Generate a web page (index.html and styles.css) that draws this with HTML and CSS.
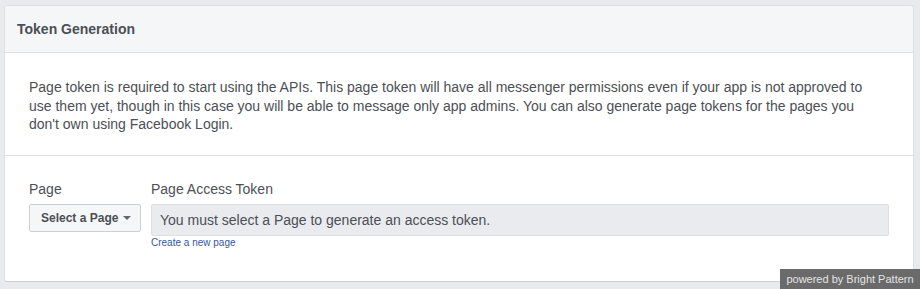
FILE: index.html
```html
<!DOCTYPE html>
<html lang="en">
<head>
    <meta charset="UTF-8">
    <title>Token Generation</title>
    <link rel="stylesheet" href="styles.css">
</head>
<body>
    <div class="card">
        <div class="card-header">Token Generation</div>
        <div class="card-intro">
            <p>Page token is required to start using the APIs. This page token will have all messenger permissions even if your app is not approved to use them yet, though in this case you will be able to message only app admins. You can also generate page tokens for the pages you don't own using Facebook Login.</p>
        </div>
        <div class="token-row">
            <div class="field">
                <label class="field-label">Page</label>
                <button class="page-select">Select a Page <span class="caret"></span></button>
            </div>
            <div class="field field-grow">
                <label class="field-label">Page Access Token</label>
                <div class="token-box">You must select a Page to generate an access token.</div>
                <a class="small-link" href="#">Create a new page</a>
            </div>
        </div>
    </div>
    <div class="powered">powered by Bright Pattern</div>
</body>
</html>
```

FILE: styles.css
```css
body {
    margin: 0;
    padding: 5px 6px 0 4px;
    background-color: #e9eaed;
    font-family: "Liberation Sans", Arial, sans-serif;
    color: #4b4f56;
    height: 289px;
    box-sizing: border-box;
}
.card {
    background-color: #fff;
    border: 1px solid #dddfe2;
    border-bottom-color: #ccd0d5;
    border-radius: 3px;
    height: 277px;
    box-sizing: border-box;
}
.card-header {
    background-color: #f5f6f7;
    border-bottom: 1px solid #dddfe2;
    border-radius: 3px 3px 0 0;
    height: 47px;
    box-sizing: border-box;
    padding: 15px 12px 0;
    font-size: 14px;
    font-weight: bold;
    line-height: 16px;
}
.card-intro {
    border-bottom: 1px solid #dddfe2;
    padding: 0 40px 0 24px;
    height: 103px;
    box-sizing: border-box;
}
.card-intro p {
    margin: 0;
    padding-top: 25px;
    font-size: 14px;
    line-height: 18.5px;
}
.token-row {
    display: flex;
    gap: 10px;
    padding: 24px 24px 0 24px;
}
.field-grow {
    flex: 1;
}
.field-label {
    display: block;
    font-size: 14px;
    line-height: 18px;
    margin-bottom: 6px;
}
.page-select {
    font-family: inherit;
    font-size: 12px;
    font-weight: bold;
    color: #4b4f56;
    background-color: #f5f6f7;
    border: 1px solid #ccd0d5;
    border-radius: 2px;
    width: 112px;
    height: 28px;
    padding: 0 0 0 11px;
    display: flex;
    align-items: center;
    gap: 5px;
}
.caret {
    width: 0;
    height: 0;
    border-left: 4px solid transparent;
    border-right: 4px solid transparent;
    border-top: 4px solid #606770;
}
.token-box {
    background-color: #e9ebee;
    border: 1px solid #dddfe2;
    border-radius: 2px;
    height: 32px;
    box-sizing: border-box;
    padding: 0 8px;
    font-size: 14px;
    line-height: 30px;
    color: #4b4f56;
}
.small-link {
    display: block;
    font-size: 10px;
    line-height: 14px;
    color: #365899;
    text-decoration: none;
}
.powered {
    position: absolute;
    right: 0;
    bottom: 0;
    background-color: #6a6a6a;
    color: #e4e4e4;
    font-size: 11px;
    line-height: 20px;
    width: 140px;
    text-align: center;
    white-space: nowrap;
}
```
